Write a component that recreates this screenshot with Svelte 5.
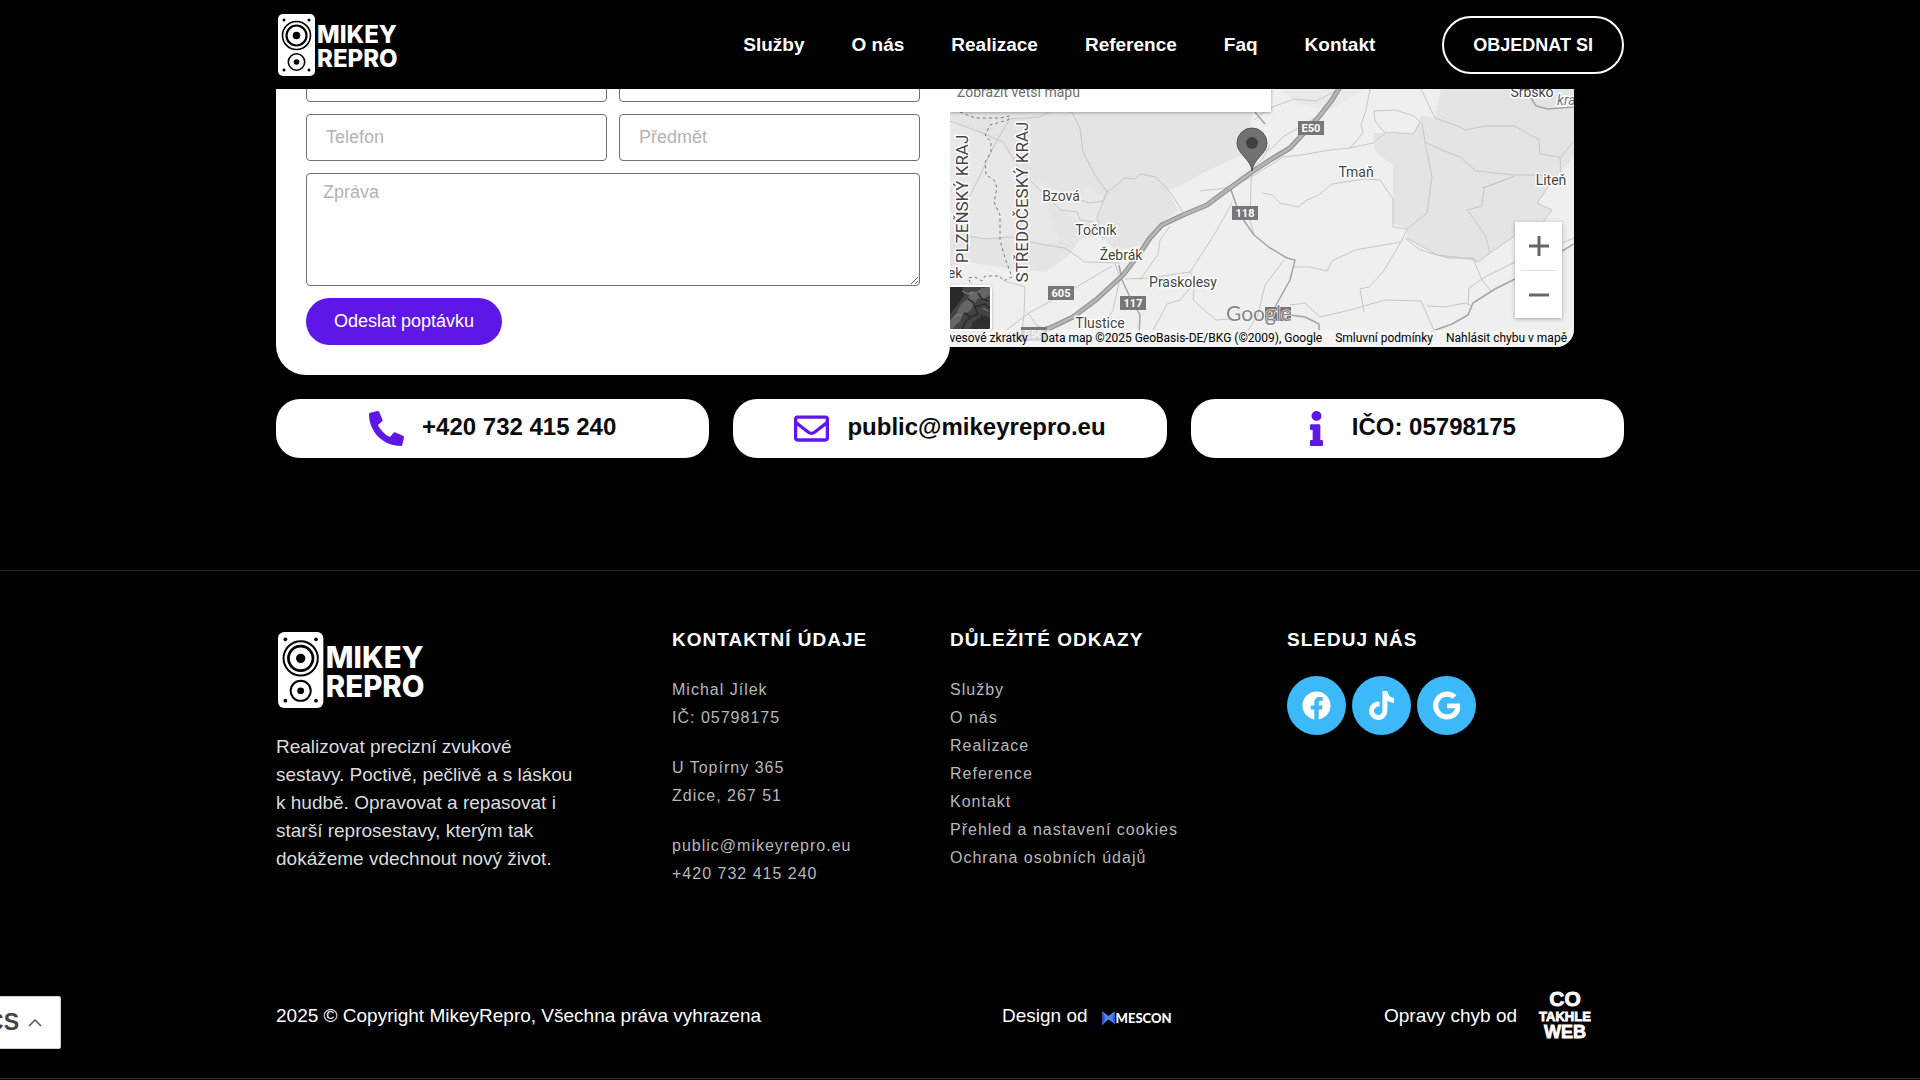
<script lang="ts">
    interface Link {
        label: string;
        href: string;
    }

    interface Label {
        text: string;
        x: number;
        y: number;
    }

    const nav: Link[] = [
        { label: "Služby", href: "#sluzby" },
        { label: "O nás", href: "#o-nas" },
        { label: "Realizace", href: "#realizace" },
        { label: "Reference", href: "#reference" },
        { label: "Faq", href: "#faq" },
        { label: "Kontakt", href: "#kontakt" },
    ];

    const footerLinks: Link[] = [
        { label: "Služby", href: "#sluzby" },
        { label: "O nás", href: "#o-nas" },
        { label: "Realizace", href: "#realizace" },
        { label: "Reference", href: "#reference" },
        { label: "Kontakt", href: "#kontakt" },
        { label: "Přehled a nastavení cookies", href: "#cookies" },
        { label: "Ochrana osobních údajů", href: "#gdpr" },
    ];

    const socials = [
        {
            name: "Facebook",
            box: "0 0 512 512",
            path: "M504 256C504 119 393 8 256 8S8 119 8 256c0 123.78 90.69 226.38 209.25 245V327.69h-63V256h63v-54.64c0-62.15 37-96.48 93.67-96.48 27.14 0 55.52 4.84 55.52 4.84v61h-31.28c-30.8 0-40.41 19.12-40.41 38.73V256h68.78l-11 71.69h-57.78V501C413.31 482.38 504 379.78 504 256z",
        },
        {
            name: "TikTok",
            box: "0 0 448 512",
            path: "M448,209.91a210.06,210.06,0,0,1-122.77-39.25V349.38A162.55,162.55,0,1,1,185,188.31V278.2a74.62,74.62,0,1,0,52.23,71.18V0l88,0a121.18,121.18,0,0,0,1.86,22.17h0A122.18,122.18,0,0,0,381,102.39a121.43,121.43,0,0,0,67,20.14Z",
        },
        {
            name: "Google",
            box: "0 0 488 512",
            path: "M488 261.8C488 403.3 391.1 504 248 504 110.8 504 0 393.2 0 256S110.8 8 248 8c66.8 0 123 24.5 166.3 64.9l-67.5 64.9C258.5 52.6 94.3 116.6 94.3 256c0 86.5 69.1 156.6 153.7 156.6 98.2 0 135-70.4 140.8-106.9H248v-85.3h236.1c2.3 12.7 3.9 24.9 3.9 41.4z",
        },
    ];

    const towns: Label[] = [
        { text: "Bzová", x: 1061, y: 201 },
        { text: "Točník", x: 1096, y: 235 },
        { text: "Žebrák", x: 1121, y: 260 },
        { text: "Praskolesy", x: 1183, y: 287 },
        { text: "Tlustice", x: 1100, y: 328 },
        { text: "Tmaň", x: 1356, y: 177 },
        { text: "Liteň", x: 1551, y: 185 },
        { text: "Srbsko", x: 1532, y: 97 },
        { text: "ek", x: 955, y: 278 },
    ];

    const shields: Label[] = [
        { text: "605", x: 1061, y: 293 },
        { text: "117", x: 1133, y: 303 },
        { text: "118", x: 1245, y: 213 },
        { text: "E50", x: 1311, y: 128 },
        { text: "114", x: 1278, y: 314 },
        { text: "E50", x: 1034, y: 334 },
    ];

    // minor roads and municipal borders
    const roads = [
        "M950 121L985 134L1003 142L1020 170L1040 190L1061 210L1077 212L1080 220L1094 222",
        "M970 196L985 165L997 140L1010 119L1040 117L1050 111",
        "M1071 111L1080 128L1083 152L1095 175L1107 192L1103 201L1090 203L1080 200",
        "M968 236L985 239L1010 237L1045 245L1065 248L1085 262L1120 263",
        "M1200 191L1225 188L1250 178L1283 157L1301 155L1330 150L1350 148L1373 143L1385 133",
        "M1112 266L1080 285L1029 313L1005 331",
        "M1005 281L1025 287L1024 315L1022 331",
        "M1028 313L1036 325L1050 332",
        "M1115 263L1120 278L1113 310L1090 345",
        "M1125 279L1150 278L1190 272L1214 235L1232 203",
        "M1170 226L1160 240L1158 254L1140 280",
        "M1190 272L1195 280L1193 300L1216 320L1230 319",
        "M1195 282L1180 300L1167 304L1152 332",
        "M1262 193L1272 195L1280 203L1298 207L1307 200L1319 195L1332 184L1365 179L1380 180L1393 199L1393 227L1407 229",
        "M1254 235L1250 220L1252 150L1270 150",
        "M1294 267L1310 267L1327 271L1332 261L1355 250L1401 242L1383 272L1369 287L1360 289L1364 312",
        "M1290 305L1305 303L1320 317L1350 310L1385 300L1421 301L1437 337",
        "M1405 238L1420 250L1448 258L1473 258L1482 280L1491 291",
        "M1427 306L1445 307L1465 303L1472 306",
        "M1425 142L1442 150L1460 157L1476 171L1515 175L1540 175",
        "M1421 89L1435 118L1460 127L1465 130L1485 126L1515 126L1530 135L1539 139L1540 154L1560 157L1561 175",
        "M1561 157L1574 141",
        "M1482 188L1515 176",
        "M1420 123L1413 134L1384 132L1375 121L1374 111L1395 110L1414 116L1421 123",
        "M1370 89L1366 110L1361 125L1363 133L1350 148",
        "M1254 120L1270 108L1294 99L1316 101L1340 89",
        "M1270 150L1283 137L1318 116",
        "M1252 168L1262 160L1270 145",
        "M1468 305L1469 288L1485 277L1515 262L1574 238",
        "M1284 260L1265 285L1258 315L1245 335",
    ];

    const majorRoads = [
        "M1231 190L1240 215L1254 235L1270 248L1287 258L1295 260L1290 280L1275 307",
        "M1119 265L1122 280L1129 295L1140 315L1139 335",
        "M1430 332L1452 324L1468 315L1473 303L1495 289L1515 279",
        "M1562 251L1574 244",
        "M1531 98L1536 106L1548 109L1574 107",
        "M1290 315L1305 317L1319 324L1319 332",
        "M1253 90L1254 111L1265 124",
    ];

    let name = $state("");
    let email = $state("");
    let phone = $state("");
    let subject = $state("");
    let message = $state("");
</script>

{#snippet logo()}
    <svg viewBox="0 0 122 62" aria-label="Mikey Repro">
        <rect width="37" height="62" rx="5" fill="#fff" />
        <g fill="#000">
            <circle cx="6" cy="6" r="1.5" />
            <circle cx="31" cy="6" r="1.5" />
            <circle cx="6" cy="56" r="1.5" />
            <circle cx="31" cy="56" r="1.5" />
            <circle cx="18.5" cy="21.5" r="3.8" />
            <circle cx="18.5" cy="48" r="2.8" />
        </g>
        <g fill="none" stroke="#000">
            <circle cx="18.5" cy="21.5" r="14" stroke-width="1.6" />
            <circle cx="18.5" cy="21.5" r="10" stroke-width="2.2" />
            <circle cx="18.5" cy="48" r="8.2" stroke-width="1.6" />
        </g>
        <text x="39" y="29">MIKEY</text>
        <text x="39" y="53">REPRO</text>
    </svg>
{/snippet}

<header>
    <div class="container bar">
        <a class="logo" href="#top" aria-label="Mikey Repro">{@render logo()}</a>
        <nav>
            {#each nav as item}
                <a href={item.href}>{item.label}</a>
            {/each}
        </nav>
        <a class="order" href="#objednat">OBJEDNAT SI</a>
    </div>
</header>

<main>
    <div class="container">
        <section class="contact">
            <form onsubmit={(e) => e.preventDefault()}>
                <input type="text" aria-label="Jméno" bind:value={name} />
                <input type="email" aria-label="E-mail" bind:value={email} />
                <input type="tel" aria-label="Telefon" placeholder="Telefon" bind:value={phone} />
                <input type="text" aria-label="Předmět" placeholder="Předmět" bind:value={subject} />
                <textarea aria-label="Zpráva" placeholder="Zpráva" bind:value={message}></textarea>
                <button type="submit">Odeslat poptávku</button>
            </form>

            <div class="map">
                <svg class="canvas" viewBox="920 53 654 294" preserveAspectRatio="xMidYMid slice" aria-hidden="true">
                    <rect x="920" y="52" width="654" height="295" fill="#efefef" />
                    <g fill="#e4e4e4">
                        <path d="M920 52H1262L1250 130L1262 148L1235 158L1205 172L1180 186L1168 190L1178 210L1160 225L1142 245L1115 250L1100 235L1080 240L1068 256L1045 272L1010 269L968 262L920 275Z" />
                        <path d="M1373 133L1413 134L1422 115L1435 118L1441 89H1574V157L1553 180L1537 203L1552 210L1543 220L1513 237L1490 253L1478 262L1437 255L1407 238L1407 229L1393 223L1393 165L1375 152Z" />
                        <path d="M1280 89H1365L1330 110L1300 105Z" fill="#e9e9e9" />
                    </g>
                    <path d="M950 118L1000 145L1035 182L1062 211L1080 222L1096 222L1105 200L1088 185L1072 200L1056 190L1038 180L1050 215L1060 240L1045 245L1000 238L968 236L950 232Z" fill="#e8e8e8" />
                    <g fill="none" stroke="#c6c6c6" stroke-linejoin="round">
                        <path d="M1107 192L1118 184L1125 178L1135 179L1141 174L1155 177L1165 186L1172 195L1183 212M1107 192L1097 217L1103 240" />
                        <path d="M1422 123L1425 142L1432 177L1427 213L1407 229L1401 242M1407 238L1437 255L1473 259L1478 262L1490 253L1486 237L1474 219L1467 210L1482 206L1484 188L1515 176M1490 253L1513 237" />
                        <path d="M1540 175L1553 180L1537 203L1552 210L1540 226" />
                        {#each roads as d}
                            <path {d} />
                        {/each}
                    </g>
                    <g fill="none" stroke="#a5a5a5" stroke-width="1.5" stroke-linejoin="round">
                        {#each majorRoads as d}
                            <path {d} />
                        {/each}
                    </g>
                    <g fill="none" stroke="#777" stroke-dasharray="3 3">
                        <path d="M960 112L975 118L1000 118L1010 116L1008 120L990 125L985 135L991 142L991 152L985 162L986 175L994 180L997 188L994 202L1000 215L1000 240L1005 258L1012 277L1003 281L1000 276L985 276L982 281L975 277L968 278L972 285" />
                    </g>
                    <g fill="none" stroke-linejoin="round" stroke-linecap="round">
                        <path d="M1022 336L1050 328L1073 317L1097 299L1123 275L1140 253L1150 238L1162 225L1183 215L1207 205L1223 193L1252 172L1270 160L1290 148L1303 134L1318 118L1332 100L1350 70" stroke="#8d8d8d" stroke-width="5" />
                        <path d="M1022 336L1050 328L1073 317L1097 299L1123 275L1140 253L1150 238L1162 225L1183 215L1207 205L1223 193L1252 172L1270 160L1290 148L1303 134L1318 118L1332 100L1350 70" stroke="#b5b5b5" stroke-width="3" />
                    </g>
                    {#each shields as s}
                        <rect x={s.x - 13} y={s.y - 7} width="26" height="14" fill="#777" />
                        <text class="shield" x={s.x} y={s.y + 4}>{s.text}</text>
                    {/each}
                    {#each towns as t}
                        <text class="town" x={t.x} y={t.y}>{t.text}</text>
                    {/each}
                    <text class="town park" x="1557" y="105">kras</text>
                    <text class="region" transform="translate(968 199) rotate(-90)">PLZEŇSKÝ KRAJ</text>
                    <text class="region" transform="translate(1028 202) rotate(-90)">STŘEDOČESKÝ KRAJ</text>
                    <path d="M1252 171C1251 159 1237 154 1237 143a15 15 0 0 1 30 0C1267 154 1253 159 1252 171Z" fill="#727272" stroke="#555" />
                    <circle cx="1252" cy="143" r="6" fill="#404040" />
                    <text class="google" x="1226" y="321">Google</text>
                </svg>
                <a class="bigger" href="#mapa">Zobrazit větší mapu</a>
                <button class="satellite" type="button" aria-label="Satelitní mapa">
                    <svg viewBox="0 0 42 42" aria-hidden="true">
                        <rect width="42" height="42" fill="#444" />
                        <path d="M0 0h14l2 9-9 12-7 9z" fill="#292929" />
                        <path d="M0 36L9 26L13 17L20 12L22 4L28 5L34 1L42 0V8L35 12L30 11L26 18L22 24L15 27L12 34L4 42H0Z" fill="#666" />
                        <path d="M22 42L25 35L31 31L36 28L42 31V42Z" fill="#303030" />
                        <path d="M14 42L18 34L23 30L30 27L27 20L36 17L42 21M20 12L25 15L27 20M23 30L16 26M33 27L34 31L37 36M30 6L34 12L40 14" fill="none" stroke="#2a2a2a" stroke-width="1.5" />
                        <path d="M14 4L18 6L22 7L26 5M5 31L9 28L14 28M35 21L40 24" fill="none" stroke="#888" />
                    </svg>
                </button>
                <div class="zoom">
                    <button type="button" aria-label="Přiblížit">
                        <svg viewBox="0 0 20 20" aria-hidden="true"><path d="M10 0V20M0 10H20" /></svg>
                    </button>
                    <button type="button" aria-label="Oddálit">
                        <svg viewBox="0 0 20 20" aria-hidden="true"><path d="M0 10H20" /></svg>
                    </button>
                </div>
                <div class="credits">
                    <a href="#zkratky">Klávesové zkratky</a>
                    <span>Data map ©2025 GeoBasis-DE/BKG (©2009), Google</span>
                    <a href="#podminky">Smluvní podmínky</a>
                    <a href="#chyba">Nahlásit chybu v mapě</a>
                </div>
            </div>
        </section>

        <section class="cards">
            <a class="card" href="tel:+420732415240">
                <svg viewBox="0 0 512 512" aria-hidden="true">
                    <path transform="translate(512 0) scale(-1 1)" d="M493.4 24.6l-104-24c-11.3-2.6-22.9 3.3-27.5 13.9l-48 112c-4.2 9.8-1.4 21.3 6.9 28l60.6 49.6c-36 76.7-98.9 140.5-177.2 177.2l-49.6-60.6c-6.8-8.3-18.2-11.1-28-6.9l-112 48C3.9 366.5-2 378.1.6 389.4l24 104C27.1 504.2 36.7 512 48 512c256.1 0 464-207.5 464-464 0-11.2-7.7-20.9-18.6-23.4z" />
                </svg>
                <span>+420 732 415 240</span>
            </a>
            <a class="card" href="mailto:public@mikeyrepro.eu">
                <svg viewBox="0 0 512 512" aria-hidden="true">
                    <path d="M464 64H48C21.49 64 0 85.49 0 112v288c0 26.51 21.49 48 48 48h416c26.51 0 48-21.49 48-48V112c0-26.51-21.49-48-48-48zm0 48v40.805c-22.422 18.259-58.168 46.651-134.587 106.49-16.841 13.247-50.201 45.072-73.413 44.701-23.208.375-56.579-31.459-73.413-44.701C106.18 199.465 70.425 171.067 48 152.805V112h416zM48 400V214.398c22.914 18.251 55.409 43.862 104.938 82.646 21.857 17.205 60.134 55.186 103.062 54.955 42.717.231 80.509-37.199 103.053-54.947 49.528-38.783 82.032-64.401 104.947-82.653V400H48z" />
                </svg>
                <span>public@mikeyrepro.eu</span>
            </a>
            <div class="card">
                <svg viewBox="0 0 192 512" aria-hidden="true">
                    <path d="M20 424.229h20V279.771H20c-11.046 0-20-8.954-20-20V212c0-11.046 8.954-20 20-20h112c11.046 0 20 8.954 20 20v212.229h20c11.046 0 20 8.954 20 20V492c0 11.046-8.954 20-20 20H20c-11.046 0-20-8.954-20-20v-47.771c0-11.046 8.954-20 20-20zM96 0C56.235 0 24 32.235 24 72s32.235 72 72 72 72-32.235 72-72S135.764 0 96 0z" />
                </svg>
                <span>IČO: 05798175</span>
            </div>
        </section>
    </div>
</main>

<footer>
    <div class="container">
        <div class="columns">
            <div class="brand">
                <a class="logo big" href="#top" aria-label="Mikey Repro">{@render logo()}</a>
                <p>
                    Realizovat precizní zvukové sestavy. Poctivě, pečlivě a s láskou k hudbě. Opravovat
                    a repasovat i starší reprosestavy, kterým tak dokážeme vdechnout nový život.
                </p>
            </div>
            <div class="details">
                <h2>KONTAKTNÍ ÚDAJE</h2>
                <p>Michal Jílek<br />IČ: 05798175</p>
                <p>U Topírny 365<br />Zdice, 267 51</p>
                <p>public@mikeyrepro.eu<br />+420 732 415 240</p>
            </div>
            <div class="details">
                <h2>DŮLEŽITÉ ODKAZY</h2>
                <ul>
                    {#each footerLinks as item}
                        <li><a href={item.href}>{item.label}</a></li>
                    {/each}
                </ul>
            </div>
            <div class="details">
                <h2>SLEDUJ NÁS</h2>
                <div class="socials">
                    {#each socials as social}
                        <a href="#{social.name}" aria-label={social.name}>
                            <svg viewBox={social.box} aria-hidden="true"><path d={social.path} /></svg>
                        </a>
                    {/each}
                </div>
            </div>
        </div>

        <div class="bottom">
            <span>2025 © Copyright MikeyRepro, Všechna práva vyhrazena</span>
            <div class="credit">
                <span>Design od</span>
                <a class="mescon" href="#mescon">
                    <svg viewBox="0 0 13 14" aria-hidden="true">
                        <path d="M0 1L5 7L1 14H0ZM13 1L8 7L13 14Z" fill="#2a52b8" />
                        <path d="M0 0L6.5 5L13 0L10.5 7L13 13L6.5 8.5L1 13L3 7Z" fill="#4f82f0" />
                    </svg>
                    <span>MESCON</span>
                </a>
            </div>
            <div class="credit web">
                <span>Opravy chyb od</span>
                <a href="#cotakhleweb" aria-label="Co takhle web">
                    <svg viewBox="0 0 55 55" aria-hidden="true">
                        <text x="27" y="18" font-size="21">CO</text>
                        <text x="27" y="33" font-size="13">TAKHLE</text>
                        <text x="27" y="50" font-size="18">WEB</text>
                    </svg>
                </a>
            </div>
        </div>
    </div>
</footer>

<button class="lang" type="button" aria-label="Jazyk: CS">
    <span>CS</span>
    <svg viewBox="0 0 14 9" aria-hidden="true"><path d="M1 8L7 2L13 8" /></svg>
</button>

<style>
    :global(body) {
        background: #000;
        color: #fff;
        font-family: "Liberation Sans", Arial, sans-serif;
        font-size: 19px;
        line-height: 28px;
    }

    header,
    main,
    footer {
        box-sizing: border-box;
        padding-right: 20px;
    }

    .container {
        max-width: 1348px;
        margin: 0 auto;
    }

    a {
        color: inherit;
        text-decoration: none;
    }

    header {
        position: fixed;
        top: 0;
        left: 0;
        right: 0;
        z-index: 10;
        background: #000;
    }

    .bar {
        display: flex;
        align-items: center;
        height: 89px;
    }

    .logo {
        display: block;
        padding-left: 2px;
    }

    .logo svg {
        display: block;
        height: 62px;
        overflow: visible;
    }

    .logo.big svg {
        height: 76px;
    }

    .logo text {
        fill: #fff;
        font-family: Inter, sans-serif;
        font-size: 24px;
        font-weight: 800;
    }

    nav {
        display: flex;
        gap: 47px;
        margin-left: auto;
        font-weight: 700;
    }

    .order {
        box-sizing: border-box;
        height: 58px;
        margin-left: 67px;
        padding: 0 29px;
        border: 2px solid #fff;
        border-radius: 29px;
        font-size: 18px;
        font-weight: 700;
        line-height: 54px;
    }

    main {
        padding-top: 25px;
    }

    .contact {
        display: flex;
        align-items: center;
    }

    form {
        position: relative;
        z-index: 1;
        flex: 0 0 50%;
        box-sizing: border-box;
        display: grid;
        grid-template-columns: 1fr 1fr;
        gap: 12px;
        padding: 30px;
        border-radius: 30px;
        background: #fff;
    }

    input,
    textarea {
        box-sizing: border-box;
        width: 100%;
        height: 47px;
        padding: 0 19px;
        border: 1px solid #69727d;
        border-radius: 4px;
        background: #fff;
        color: #333;
        font: 18px "Liberation Sans", Arial, sans-serif;
    }

    textarea {
        display: block;
        grid-column: 1 / -1;
        height: 113px;
        padding: 8px 16px;
        resize: vertical;
    }

    input::placeholder,
    textarea::placeholder {
        color: #b3b3b3;
        opacity: 1;
    }

    form button {
        justify-self: start;
        height: 47px;
        padding: 0 28px;
        border: none;
        border-radius: 24px;
        background: #5f17e8;
        color: #fff;
        font: 18px "Liberation Sans", Arial, sans-serif;
        cursor: pointer;
    }

    .map {
        position: relative;
        flex: 1;
        height: 294px;
        margin: 0 50px 0 -30px;
        border-radius: 18px;
        overflow: hidden;
        font-family: Roboto, sans-serif;
    }

    .canvas {
        display: block;
        width: 100%;
        height: 100%;
    }

    .canvas text {
        text-anchor: middle;
        paint-order: stroke;
        stroke: #fff;
        stroke-width: 3px;
        stroke-linejoin: round;
        fill: #444;
    }

    .canvas .town {
        font-size: 14px;
    }

    .canvas .park {
        text-anchor: start;
        font-style: italic;
        fill: #777;
    }

    .canvas .region {
        font-size: 17px;
    }

    .canvas .shield {
        font-size: 11px;
        font-weight: 700;
        stroke: none;
        fill: #fff;
    }

    .canvas .google {
        text-anchor: start;
        font-family: Lato, sans-serif;
        font-size: 21px;
        fill: #858585;
        stroke-width: 1px;
    }

    .bigger {
        position: absolute;
        top: 0;
        left: 30px;
        box-sizing: border-box;
        width: 321px;
        height: 59px;
        padding: 25px 7px 0;
        background: #fff;
        box-shadow: 0 1px 3px rgba(0, 0, 0, 0.3);
        color: #6c6c6c;
        font-size: 14px;
    }

    .satellite {
        position: absolute;
        left: 26px;
        bottom: 16px;
        width: 46px;
        height: 46px;
        padding: 0;
        border: 2px solid #fff;
        border-radius: 4px;
        background: #444;
        box-shadow: 0 1px 3px rgba(0, 0, 0, 0.3);
        overflow: hidden;
    }

    .satellite svg {
        display: block;
    }

    .zoom {
        position: absolute;
        right: 12px;
        bottom: 29px;
        width: 47px;
        padding: 0 6px;
        box-sizing: border-box;
        background: #fff;
        box-shadow: 0 1px 4px rgba(0, 0, 0, 0.3);
    }

    .zoom button {
        display: grid;
        place-items: center;
        width: 100%;
        height: 48px;
        padding: 0;
        border: none;
        background: none;
        cursor: pointer;
    }

    .zoom button + button {
        border-top: 1px solid #e2e2e2;
    }

    .zoom svg {
        width: 20px;
        height: 20px;
        fill: none;
        stroke: #666;
        stroke-width: 3;
    }

    .credits {
        position: absolute;
        left: 0;
        right: 0;
        bottom: 0;
        display: flex;
        justify-content: flex-end;
        gap: 13px;
        padding-right: 7px;
        background: rgba(245, 245, 245, 0.75);
        color: #000;
        font-size: 12px;
        line-height: 17px;
        white-space: nowrap;
    }

    .cards {
        display: grid;
        grid-template-columns: repeat(3, 1fr);
        gap: 24px;
        margin-top: 24px;
    }

    .card {
        display: flex;
        align-items: center;
        justify-content: center;
        gap: 18px;
        height: 59px;
        border-radius: 24px;
        background: #fff;
        color: #0a0a0a;
        font-size: 24px;
        font-weight: 700;
    }

    .card svg {
        width: 35px;
        height: 35px;
        fill: #5f17e8;
    }

    .card span {
        padding-bottom: 4px;
    }

    footer {
        margin-top: 112px;
        padding-top: 55px;
        padding-bottom: 35px;
        border-top: 1px solid #262626;
        border-bottom: 1px solid #333;
    }

    .columns {
        display: grid;
        grid-template-columns: 396fr 278fr 337fr 337fr;
        margin-bottom: 100px;
    }

    .brand {
        padding-top: 6px;
        color: #dcdcdc;
    }

    .brand p {
        max-width: 304px;
        margin: 25px 0 0;
    }

    h2 {
        margin: 0 0 22px;
        font-size: 19px;
        font-weight: 700;
        letter-spacing: 1px;
    }

    .details p,
    .details ul {
        margin: 0;
        padding: 0;
        list-style: none;
        color: #b8b8b8;
        font-size: 16px;
        letter-spacing: 1px;
    }

    .details p + p {
        margin-top: 22px;
    }

    .socials {
        display: flex;
        gap: 6px;
    }

    .socials a {
        display: grid;
        place-items: center;
        width: 59px;
        height: 59px;
        border-radius: 50%;
        background: #3db9fa;
    }

    .socials svg {
        height: 29px;
        fill: #fff;
    }

    .bottom {
        display: grid;
        grid-template-columns: 726fr 382fr 240fr;
        align-items: center;
    }

    .credit {
        display: flex;
        align-items: center;
        gap: 14px;
    }

    .credit.web {
        gap: 21px;
    }

    .mescon {
        display: flex;
        align-items: center;
        gap: 1px;
        padding-top: 4px;
        font-family: Lato, sans-serif;
        font-size: 13px;
        font-weight: 900;
        line-height: 16px;
    }

    .mescon svg {
        width: 13px;
        height: 14px;
    }

    .web svg {
        display: block;
        width: 55px;
        height: 55px;
    }

    .web text {
        fill: #fff;
        stroke: #fff;
        stroke-width: 0.8px;
        font-family: "Liberation Sans", sans-serif;
        font-weight: 700;
        text-anchor: middle;
    }

    .lang {
        position: fixed;
        left: -30px;
        bottom: 31px;
        z-index: 5;
        display: flex;
        align-items: center;
        justify-content: flex-end;
        gap: 9px;
        box-sizing: border-box;
        width: 91px;
        height: 53px;
        padding: 0 18px 0 0;
        border: 1px solid #ccc;
        border-radius: 2px;
        background: #fff;
        color: #444;
        font: 700 23px "Liberation Sans", Arial, sans-serif;
        cursor: pointer;
    }

    .lang svg {
        width: 14px;
        height: 9px;
        fill: none;
        stroke: #555;
        stroke-width: 1.5;
    }
</style>
